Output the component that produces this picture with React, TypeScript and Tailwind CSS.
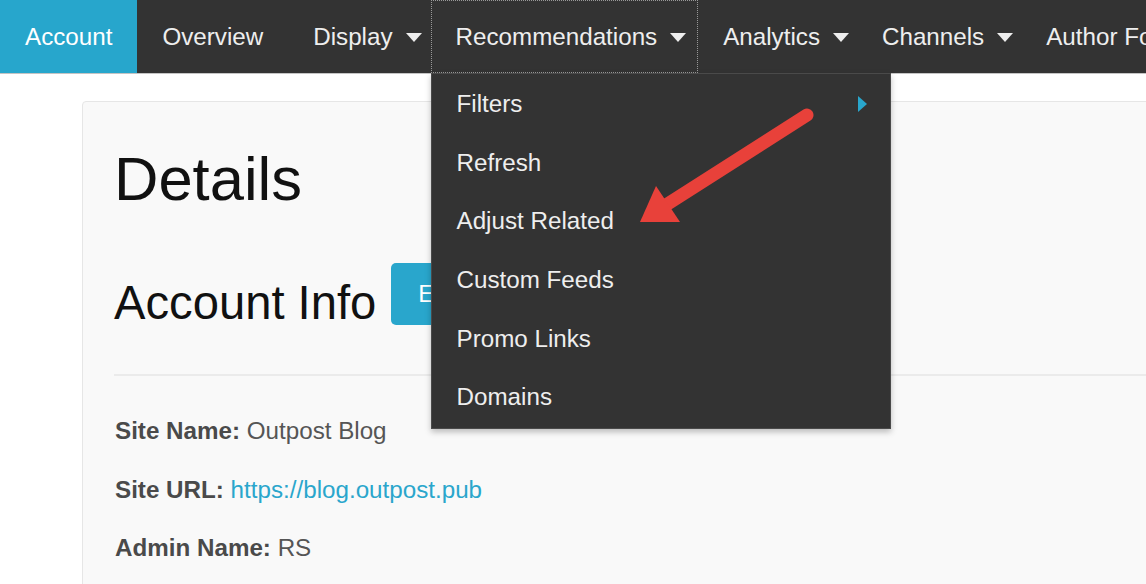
import React from "react";

const Caret = () => (
  <svg width="16" height="9" viewBox="0 0 16 9" className="ml-[13px] shrink-0">
    <polygon points="0,0 16,0 8,9" fill="#eeeeee" />
  </svg>
);

function NavItem({ label, dropdown, wide }: { label: string; dropdown?: boolean; wide?: boolean }) {
  const pr = dropdown ? (wide ? "pr-[12px]" : "pr-[8px]") : "pr-[25px]";
  return (
    <div className={`flex h-full shrink-0 items-center pt-[2px] pl-[25px] ${pr}`}>
      <span className="whitespace-nowrap">{label}</span>
      {dropdown && <Caret />}
    </div>
  );
}

const menuItems = ["Filters", "Refresh", "Adjust Related", "Custom Feeds", "Promo Links", "Domains"];

export default function App() {
  return (
    <div
      className="relative h-[584px] w-[1146px] overflow-hidden bg-white"
      style={{ fontFamily: '"Liberation Sans", Arial, sans-serif' }}
    >
      {/* Navbar */}
      <nav className="relative z-20 flex h-[73px] w-full flex-nowrap bg-[#333333] text-[24.2px] text-[#eeeeee]">
        <div className="flex h-full shrink-0 items-center bg-[#27a6cc] px-[25px] pt-[2px] text-white">Account</div>
        <NavItem label="Overview" />
        <div className="pr-[1px]">
          <NavItem label="Display" dropdown />
        </div>
        <div className="relative h-full shrink-0 outline-1 -outline-offset-1 outline-dotted outline-[#9a9a9a]">
          <NavItem label="Recommendations" dropdown wide />
          <div className="absolute left-0 top-full w-[460px] border border-[#4a4a4a] bg-[#333333] py-[1px] shadow-[0_3px_6px_rgba(0,0,0,0.25)]">
            {menuItems.map((m, i) => (
              <div key={m} className="flex h-[58.6px] items-center justify-between pl-[25px] pr-[23px]">
                <span className="whitespace-nowrap">{m}</span>
                {i === 0 && (
                  <svg width="9" height="16" viewBox="0 0 9 16">
                    <polygon points="0,0 9,8 0,16" fill="#29a6cc" />
                  </svg>
                )}
              </div>
            ))}
          </div>
        </div>
        <NavItem label="Analytics" dropdown />
        <NavItem label="Channels" dropdown />
        <NavItem label="Author Follows" />
      </nav>
      <div className="h-[1px] w-full bg-[#c4c4c4]" />

      {/* Content */}
      <div className="pl-[82px] pt-[27px]">
        <div className="w-[1130px] rounded-[4px] border border-[#e6e6e6] bg-[#f9f9f9] pl-[31px] pt-[44px]">
          <h1 className="text-[61.5px] leading-[66px] text-[#111111]">Details</h1>
          <div className="mt-[51px] flex items-start">
            <h2 className="mt-[9px] text-[47.2px] leading-[62px] text-[#111111]">Account Info</h2>
            <button className="ml-[15px] h-[62px] rounded-[5px] bg-[#29a6cc] px-[27px] text-[24.2px] text-white">
              Edit
            </button>
          </div>
          <div className="mt-[40px] h-[2px] w-full bg-[#ebebeb]" />
          <div className="mt-[40px] flex flex-col gap-[28.5px] pb-[40px] pl-[1px] text-[24.2px] leading-[30px] text-[#555555]">
            <p>
              <b className="text-[#4a4a4a]">Site Name:</b> Outpost Blog
            </p>
            <p>
              <b className="text-[#4a4a4a]">Site URL:</b>{" "}
              <a className="text-[#2aa6cc]">https://blog.outpost.pub</a>
            </p>
            <p>
              <b className="text-[#4a4a4a]">Admin Name:</b> RS
            </p>
          </div>
        </div>
      </div>

      {/* Annotation arrow */}
      <svg className="pointer-events-none absolute left-0 top-0 z-30" width="1146" height="584" viewBox="0 0 1146 584">
        <line x1="807" y1="115" x2="666" y2="205" stroke="#e8413a" strokeWidth="13" strokeLinecap="round" />
        <polygon points="640,222 656,186 680,222" fill="#e8413a" />
      </svg>
    </div>
  );
}
